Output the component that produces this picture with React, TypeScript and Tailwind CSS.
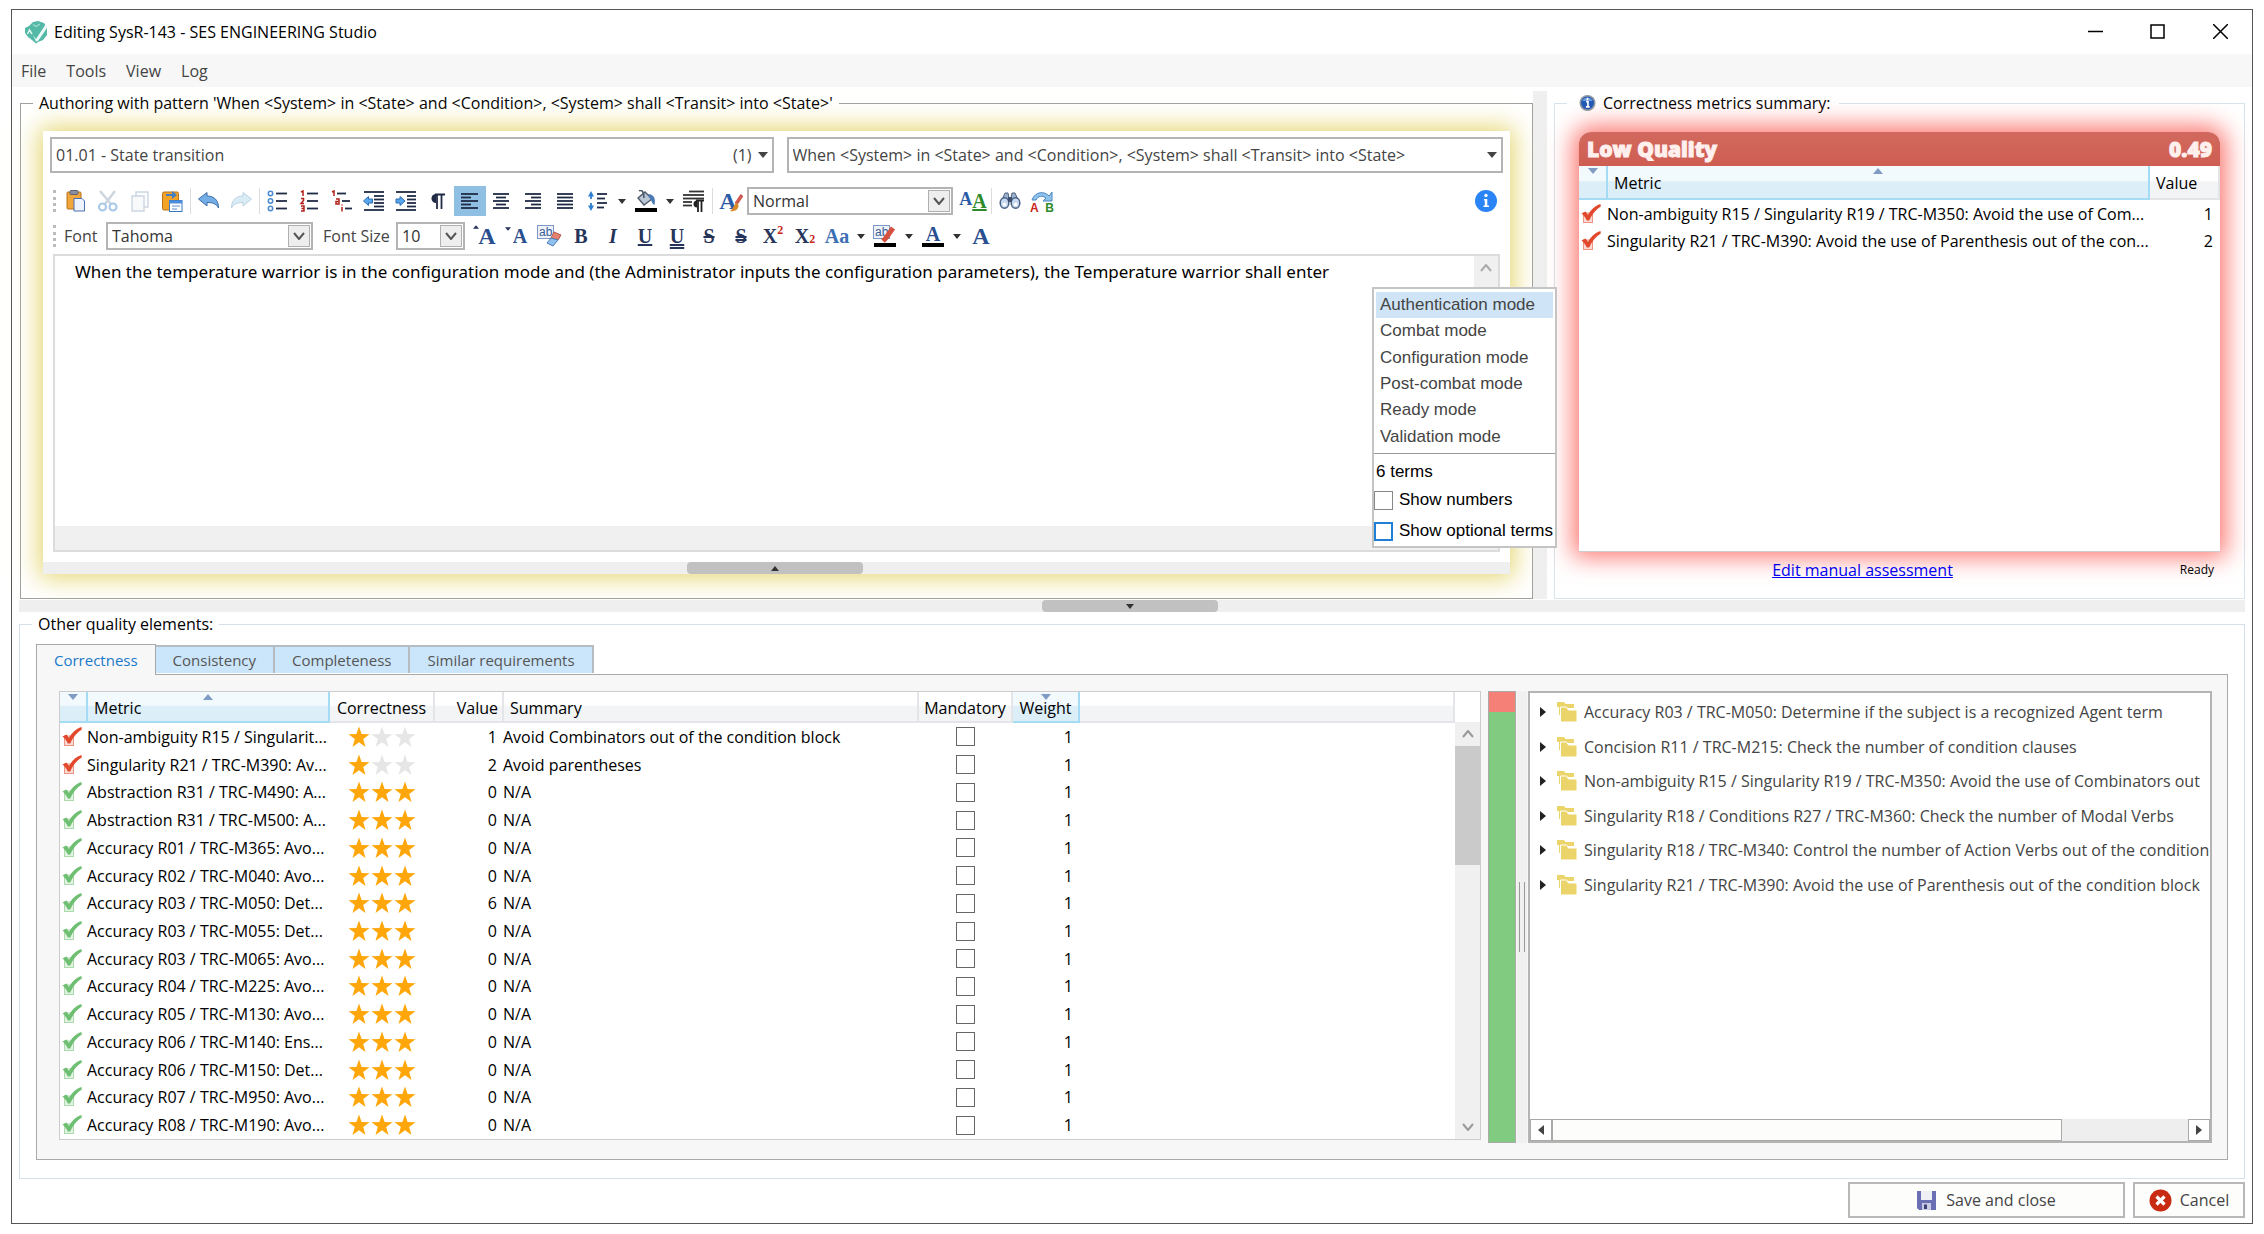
import { useState } from "react";
import type { ReactNode } from "react";
import clsx from "clsx";

const RED = "#e2492c";
const GREEN = "#6fbf73";

const terms = [
  "Authentication mode",
  "Combat mode",
  "Configuration mode",
  "Post-combat mode",
  "Ready mode",
  "Validation mode",
];

const summaryRows = [
  { name: "Non-ambiguity R15 / Singularity R19 / TRC-M350: Avoid the use of Com...", value: 1 },
  { name: "Singularity R21 / TRC-M390: Avoid the use of Parenthesis out of the con...", value: 2 },
];

const metrics = [
  { name: "Non-ambiguity R15 / Singularit...", stars: 1, value: 1, summary: "Avoid Combinators out of the condition block" },
  { name: "Singularity R21 / TRC-M390: Av...", stars: 1, value: 2, summary: "Avoid parentheses" },
  { name: "Abstraction R31 / TRC-M490: A...", stars: 3, value: 0, summary: "N/A" },
  { name: "Abstraction R31 / TRC-M500: A...", stars: 3, value: 0, summary: "N/A" },
  { name: "Accuracy R01 / TRC-M365: Avo...", stars: 3, value: 0, summary: "N/A" },
  { name: "Accuracy R02 / TRC-M040: Avo...", stars: 3, value: 0, summary: "N/A" },
  { name: "Accuracy R03 / TRC-M050: Det...", stars: 3, value: 6, summary: "N/A" },
  { name: "Accuracy R03 / TRC-M055: Det...", stars: 3, value: 0, summary: "N/A" },
  { name: "Accuracy R03 / TRC-M065: Avo...", stars: 3, value: 0, summary: "N/A" },
  { name: "Accuracy R04 / TRC-M225: Avo...", stars: 3, value: 0, summary: "N/A" },
  { name: "Accuracy R05 / TRC-M130: Avo...", stars: 3, value: 0, summary: "N/A" },
  { name: "Accuracy R06 / TRC-M140: Ens...", stars: 3, value: 0, summary: "N/A" },
  { name: "Accuracy R06 / TRC-M150: Det...", stars: 3, value: 0, summary: "N/A" },
  { name: "Accuracy R07 / TRC-M950: Avo...", stars: 3, value: 0, summary: "N/A" },
  { name: "Accuracy R08 / TRC-M190: Avo...", stars: 3, value: 0, summary: "N/A" },
];

const tree = [
  "Accuracy R03 / TRC-M050: Determine if the subject is a recognized Agent term",
  "Concision R11 / TRC-M215: Check the number of condition clauses",
  "Non-ambiguity R15 / Singularity R19 / TRC-M350: Avoid the use of Combinators out",
  "Singularity R18 / Conditions R27 / TRC-M360: Check the number of Modal Verbs",
  "Singularity R18 / TRC-M340: Control the number of Action Verbs out of the condition",
  "Singularity R21 / TRC-M390: Avoid the use of Parenthesis out of the condition block",
];

const tabs = ["Correctness", "Consistency", "Completeness", "Similar requirements"];

/* ---------- small drawings ---------- */

function Svg({ children, size = 22 }: { children: ReactNode; size?: number }) {
  return (
    <svg width={size} height={size} viewBox="0 0 22 22" fill="none" aria-hidden="true">
      {children}
    </svg>
  );
}

function Lines({ rows, color = "#1f2a44" }: { rows: number[][]; color?: string }) {
  return (
    <>
      {rows.map(([x1, x2, y]) => (
        <path key={`${x1}-${y}`} d={`M${x1} ${y}H${x2}`} stroke={color} strokeWidth="1.8" />
      ))}
    </>
  );
}

function Triangle({ dir, className = "fill-[#444]" }: { dir: "up" | "down" | "left" | "right"; className?: string }) {
  const d = {
    up: "M0 8 L5 2 L10 8Z",
    down: "M0 2 L10 2 L5 8Z",
    left: "M8 0 L2 5 L8 10Z",
    right: "M2 0 L8 5 L2 10Z",
  }[dir];
  return (
    <svg viewBox="0 0 10 10" className={clsx("size-[10px] shrink-0", className)} aria-hidden="true">
      <path d={d} />
    </svg>
  );
}

function Chevron({ up, className = "stroke-[#555]" }: { up?: boolean; className?: string }) {
  return (
    <svg width="12" height="8" viewBox="0 0 12 8" fill="none" strokeWidth="2" className={className} aria-hidden="true">
      <path d={up ? "M1 7 L6 1 L11 7" : "M1 1 L6 7 L11 1"} />
    </svg>
  );
}

function CheckMark({ color }: { color: string }) {
  return (
    <svg width="20" height="20" viewBox="0 0 20 20" fill="none" aria-hidden="true">
      <rect x="2.5" y="9" width="9" height="9.5" fill={color} fillOpacity="0.2" stroke={color} strokeOpacity="0.55" />
      <path d="M.5 9.500 L4.500 7.500 L7 11 C10 5.500 13.500 2 19.500 0 L19.800 2.500 C15 5.500 11 10 8.200 16.500 L5.800 16.500 C4.500 13.500 3 11.500 .5 9.500Z" fill={color} />
    </svg>
  );
}

function Stars({ count }: { count: number }) {
  return (
    <svg width="68" height="22" viewBox="0 0 68 22" role="img" aria-label={`${count} of 3`}>
      {[0, 1, 2].map((i) => (
        <path
          key={i}
          transform={`translate(${i * 23} 0)`}
          d="M11 .5 L13.6 8.1 L21.5 8.3 L15.2 13.1 L17.5 21 L11 16.3 L4.5 21 L6.8 13.1 L.5 8.3 L8.4 8.1Z"
          fill={i < count ? "#ffa60a" : "#e6e6e6"}
        />
      ))}
    </svg>
  );
}

function Folder() {
  return (
    <svg width="22" height="20" viewBox="0 0 22 20" fill="#ebd56a" className="shrink-0" aria-hidden="true">
      <path d="M1 0h7l1.500 2H18v4H5v7H3V5H1Z" />
      <path d="M4.500 5h6l2 3H21v12H4.500Z" stroke="#fff" strokeWidth="1" />
    </svg>
  );
}

function AppLogo() {
  return (
    <svg width="24" height="24" viewBox="0 0 24 24" fill="none" aria-hidden="true">
      <path d="M1 8 L5 6 L9 2 L14 1 L20 3 L23 8 L23 15 L19 20 L14 22 L12 23.500 L8 20 L4 17 L1 13Z" fill="#54b9a6" />
      <path d="M9 15 L12 19 L21.500 4.500 L23 8 L14 21 L12 21.500Z" fill="#eefaf7" />
      <path d="M3.500 14 L5.500 10 L8 14" stroke="#e2f6f2" strokeWidth="1.500" />
      <path d="M9 4.500 L12 6.500 L16 4" stroke="#a5dcd0" strokeWidth="1.200" />
    </svg>
  );
}

function InfoBadge() {
  return (
    <svg width="17" height="18" viewBox="0 0 18 18" aria-hidden="true">
      <circle cx="9" cy="9" r="8.500" fill="#8e98a6" />
      <circle cx="9" cy="9" r="6.800" fill="#1f59b5" />
      <path d="M3.500 7 A6 6 0 0 1 14.500 7Z" fill="#6fa0e0" />
      <path d="M9 3.500v2.200 M7.500 7.500H9.500V13 M7.300 13.200h4" stroke="#fff" strokeWidth="1.800" fill="none" />
    </svg>
  );
}

const icons = {
  paste: (
    <Svg>
      <rect x="2" y="2" width="14" height="17" rx="1" fill="#f0a63a" stroke="#b8731c" />
      <rect x="5" y="0.5" width="8" height="4" rx="1" fill="#8a8fa0" stroke="#5f6474" />
      <path d="M9 8.500h8l2.500 2.500v10H9Z" fill="#eef4ff" stroke="#4a6db0" />
    </Svg>
  ),
  cut: (
    <Svg>
      <path d="M3 1 L14 14 M18 1 L8 14" stroke="#ccd5de" strokeWidth="2.400" />
      <circle cx="5.500" cy="17" r="3.500" stroke="#a9c9e6" strokeWidth="2.200" />
      <circle cx="16" cy="17" r="3.500" stroke="#a9c9e6" strokeWidth="2.200" />
    </Svg>
  ),
  copy: (
    <Svg>
      <path d="M7 2h12v15H7Z" fill="#fbfcfd" stroke="#ccd6e2" strokeWidth="1.400" />
      <path d="M3 6h12v15H3Z" fill="#f7f9fb" stroke="#ccd6e2" strokeWidth="1.400" />
    </Svg>
  ),
  pasteSpecial: (
    <Svg>
      <rect x="1.500" y="2" width="16" height="18" rx="1.500" fill="#f3a326" stroke="#b8731c" />
      <path d="M5 4h6V1l5 4-5 4V6H5Z" fill="#3f7fc8" />
      <rect x="8.500" y="10.500" width="12.500" height="11" fill="#fff" stroke="#3b78c4" />
      <path d="M8.500 12h12.500" stroke="#4c8ddb" strokeWidth="3" />
      <path d="M11 16h8 M11 19h5" stroke="#5d8fcc" />
    </Svg>
  ),
  undo: (
    <Svg>
      <path d="M.5 9 L9 2.500 V6 C16 6 20.500 10 20.500 18 C18 13.500 14.500 12.500 9 12.500 V16Z" fill="#74aee6" stroke="#3d6ca8" />
    </Svg>
  ),
  redo: (
    <Svg>
      <path d="M21.500 9 L13 2.500 V6 C6 6 1.500 10 1.500 18 C4 13.500 7.500 12.500 13 12.500 V16Z" fill="#d9ebf5" stroke="#bcd3e3" />
    </Svg>
  ),
  bullets: (
    <Svg>
      {[3.5, 11, 18.5].map((y) => (
        <circle key={y} cx="3.500" cy={y} r="2.200" stroke="#4a8ad0" strokeWidth="1.500" />
      ))}
      <Lines rows={[[9, 20, 3.5], [9, 20, 11], [9, 20, 18.5]]} />
    </Svg>
  ),
  numbers: (
    <Svg>
      <path d="M2 2 L4 1V6 M2 8.500h2.500v2L2 13.500h3 M2 16h3v5H2 M2.500 18.500H5" stroke="#b4211a" strokeWidth="1.500" />
      <Lines rows={[[8, 19, 3.5], [8, 19, 11], [8, 19, 18.5]]} />
    </Svg>
  ),
  multilevel: (
    <Svg>
      <path d="M1 2 L3 1V6 M5 9h3v5H5v-2.500h3 M11 17v4.500 M11 14.500v1" stroke="#b4211a" strokeWidth="1.500" />
      <Lines rows={[[6, 15, 3.5], [11, 19, 11], [14, 21, 18.5]]} />
    </Svg>
  ),
  outdent: (
    <Svg>
      <Lines rows={[[1, 21, 2], [1, 21, 20], [11, 21, 6], [11, 21, 9.5], [11, 21, 13], [11, 21, 16.5]]} />
      <path d="M0.500 11 L5.500 6.500V9h4v4h-4v2.500Z" fill="#58a6ec" stroke="#2d6cb5" />
    </Svg>
  ),
  indent: (
    <Svg>
      <Lines rows={[[1, 21, 2], [1, 21, 20], [12, 21, 6], [12, 21, 9.5], [12, 21, 13], [12, 21, 16.5]]} />
      <path d="M10 11 L5 6.500V9H1v4h4v2.500Z" fill="#58a6ec" stroke="#2d6cb5" />
    </Svg>
  ),
  pilcrow: (
    <Svg>
      <path d="M9 4 A4.500 4.500 0 0 0 9 13Z" fill="#1f2a44" />
      <path d="M10 4v15 M14.500 4v15 M8 4.500h10" stroke="#1f2a44" strokeWidth="1.800" />
    </Svg>
  ),
  alignLeft: (
    <Svg>
      <Lines rows={[[2, 19, 4], [2, 12, 7.5], [2, 19, 11], [2, 12, 14.5], [2, 19, 18]]} />
    </Svg>
  ),
  alignCenter: (
    <Svg>
      <Lines rows={[[2, 18, 4], [5, 15, 7.5], [2, 18, 11], [5, 15, 14.5], [2, 18, 18]]} />
    </Svg>
  ),
  alignRight: (
    <Svg>
      <Lines rows={[[2, 18, 4], [8, 18, 7.5], [2, 18, 11], [8, 18, 14.5], [2, 18, 18]]} />
    </Svg>
  ),
  justify: (
    <Svg>
      <Lines rows={[[2, 18, 4], [2, 18, 7.5], [2, 18, 11], [2, 18, 14.5], [2, 18, 18]]} />
    </Svg>
  ),
  lineSpacing: (
    <Svg>
      <path d="M1 6.500 L4 1 L7 6.500Z M1 15.500 L4 21 L7 15.500Z" fill="#2f7fd3" />
      <path d="M4 6v3 M4 13v3" stroke="#2f7fd3" strokeWidth="1.800" />
      <Lines rows={[[10, 20, 4], [10, 18, 8.5], [10, 20, 13], [10, 17, 17.5]]} />
    </Svg>
  ),
  fill: (
    <Svg>
      <path d="M3 8 L10 2 L17 9 L9 15Z" fill="#b9c6d6" stroke="#4b5666" strokeWidth="1.300" />
      <path d="M4 1 C7 -1 9 2 9 8" stroke="#4b5666" strokeWidth="1.500" />
      <path d="M13 4 C19 4 21 9 19.500 15 C16 13 17 10 14.500 8Z" fill="#4a7ab5" />
      <path d="M0 20h22" stroke="#000" strokeWidth="4" />
    </Svg>
  ),
  paragraph: (
    <Svg>
      <Lines color="#333" rows={[[6, 21, 1.5], [0, 21, 5], [0, 21, 8.5], [0, 9, 12], [0, 9, 15.5]]} />
      <path d="M14 10.500 A3.500 3.500 0 0 0 14 17.500Z" fill="#222" />
      <path d="M15 10v12 M18.500 10v12 M13 10.500h8" stroke="#222" strokeWidth="1.800" />
    </Svg>
  ),
  binoculars: (
    <Svg>
      <path d="M6 3h3l1.500 8H2.500Z M13 3h3l3.500 8h-8Z" fill="#9fb2cc" stroke="#4a6285" />
      <ellipse cx="5.500" cy="13" rx="4.300" ry="5.300" fill="#c9daf0" stroke="#4a6285" strokeWidth="1.500" />
      <ellipse cx="16.500" cy="13" rx="4.300" ry="5.300" fill="#c9daf0" stroke="#4a6285" strokeWidth="1.500" />
      <circle cx="5.500" cy="14.500" r="1.800" fill="#fff" />
      <circle cx="16.500" cy="14.500" r="1.800" fill="#fff" />
      <path d="M9 7h4v5H9Z" fill="#3c4f70" />
    </Svg>
  ),
};

function AbBox() {
  return (
    <span className="absolute top-1 left-1 border border-[#7d98c6] bg-[#eef3fb] px-px font-['Liberation_Sans'] text-xs leading-3 font-normal text-[#3b5c95]">
      ab
    </span>
  );
}

/* ---------- form controls ---------- */

function ToolButton({ label, active, children }: { label: string; active?: boolean; children: ReactNode }) {
  return (
    <button
      type="button"
      title={label}
      aria-label={label}
      className={clsx(
        "relative flex h-[30px] w-8 shrink-0 items-center justify-center font-['Liberation_Serif'] text-xl font-bold text-[#26345a]",
        active && "bg-[#8fbfe3]"
      )}
    >
      {children}
    </button>
  );
}

function Caret({ label }: { label: string }) {
  return (
    <button type="button" aria-label={label} className="flex h-[30px] w-4 shrink-0 items-center justify-center">
      <svg width="8" height="5" viewBox="0 0 8 5" fill="#333" aria-hidden="true">
        <path d="M0 0h8L4 5Z" />
      </svg>
    </button>
  );
}

function Separator() {
  return <span className="mx-0.5 h-[26px] w-px shrink-0 bg-[#dcdcdc]" />;
}

function Grip() {
  return <span className="mr-1 ml-[3px] h-[22px] w-0 shrink-0 border-l-3 border-dotted border-[#bbb]" />;
}

function ToolSelect({ id, label, value, className }: { id: string; label: string; value: string; className: string }) {
  return (
    <div className={clsx("relative h-7 shrink-0", className)}>
      <select
        id={id}
        aria-label={label}
        className="size-full appearance-none border-2 border-[#b4b4b4] bg-white pl-1 text-base leading-6 text-[#333]"
      >
        <option>{value}</option>
      </select>
      <span className="pointer-events-none absolute top-[3px] right-[3px] bottom-[3px] flex w-[22px] items-center justify-center border border-[#b0b0b0] bg-[#eee]">
        <Chevron />
      </span>
    </div>
  );
}

function PatternSelect({ label, value, count }: { label: string; value: string; count?: string }) {
  return (
    <div className="relative h-9">
      <select
        aria-label={label}
        className="size-full appearance-none border-2 border-[#b4b4b4] bg-white pl-1 text-base text-[#444]"
      >
        <option>{value}</option>
      </select>
      <span className="pointer-events-none absolute inset-y-0 right-1.5 flex items-center gap-1.5 text-base text-[#444]">
        {count}
        <Triangle dir="down" />
      </span>
    </div>
  );
}

function Handle({ dir }: { dir: "up" | "down" }) {
  return (
    <button
      type="button"
      aria-label={dir === "up" ? "Collapse" : "Expand"}
      className="flex h-full w-44 items-center justify-center rounded bg-[#c1c1c1]"
    >
      <svg width="8" height="5" viewBox="0 0 8 5" fill="#333" aria-hidden="true">
        <path d={dir === "up" ? "M0 5h8L4 0Z" : "M0 0h8L4 5Z"} />
      </svg>
    </button>
  );
}

function SortHeader({ children, dir, className }: { children?: ReactNode; dir: "up" | "down"; className?: string }) {
  return (
    <th
      className={clsx(
        "relative border-r-2 border-b-2 border-[#a5dcf5] bg-linear-to-b from-[#f3fafd] from-45% to-[#dceef7] to-50% pt-0.5 font-normal",
        className
      )}
    >
      <Triangle dir={dir} className="absolute top-0 left-1/2 -translate-x-1/2 fill-[#7f9bc4]" />
      {children}
    </th>
  );
}

const plainHeader =
  "border-r-2 border-b-2 border-[#e3e5e8] bg-linear-to-b from-white from-45% to-[#f2f4f6] to-50% pt-0.5 font-normal";

/* ---------- panels ---------- */

function TermsPopup() {
  const [selected, setSelected] = useState(0);
  return (
    <div className="absolute top-[31px] -right-[59px] z-10 w-[185px] border-2 border-[#c4c4c4] bg-white font-['Liberation_Sans'] text-[17px] whitespace-nowrap text-black">
      <ul className="grid h-[165px] auto-rows-fr border-b border-[#999] px-0.5 pt-[3px] pb-[3px]">
        {terms.map((term, i) => (
          <li key={term}>
            <button
              type="button"
              onClick={() => setSelected(i)}
              className={clsx("block h-full w-full pl-1 text-left text-[#444]", i === selected && "bg-[#cfe4f6]")}
            >
              {term}
            </button>
          </li>
        ))}
      </ul>
      <p className="pt-1.5 pl-0.5 leading-6">6 terms</p>
      <label className="flex h-8 items-center gap-1.5">
        <input type="checkbox" className="size-[19px] shrink-0 appearance-none border border-[#888] bg-white" />
        Show numbers
      </label>
      <label className="flex h-[30px] items-center gap-1.5">
        <input type="checkbox" className="size-[19px] shrink-0 appearance-none border-2 border-[#1f7fd6] bg-white" />
        Show optional terms
      </label>
    </div>
  );
}

function FormatToolbar() {
  return (
    <div className="text-base text-[#444]">
      <div className="flex h-[34px] items-center">
        <Grip />
        <ToolButton label="Paste">{icons.paste}</ToolButton>
        <ToolButton label="Cut">{icons.cut}</ToolButton>
        <ToolButton label="Copy">{icons.copy}</ToolButton>
        <ToolButton label="Paste special">{icons.pasteSpecial}</ToolButton>
        <Separator />
        <ToolButton label="Undo">{icons.undo}</ToolButton>
        <ToolButton label="Redo">{icons.redo}</ToolButton>
        <Separator />
        <ToolButton label="Bullets">{icons.bullets}</ToolButton>
        <ToolButton label="Numbering">{icons.numbers}</ToolButton>
        <ToolButton label="Multilevel list">{icons.multilevel}</ToolButton>
        <ToolButton label="Decrease indent">{icons.outdent}</ToolButton>
        <ToolButton label="Increase indent">{icons.indent}</ToolButton>
        <ToolButton label="Show marks">{icons.pilcrow}</ToolButton>
        <ToolButton label="Align left" active>{icons.alignLeft}</ToolButton>
        <ToolButton label="Center">{icons.alignCenter}</ToolButton>
        <ToolButton label="Align right">{icons.alignRight}</ToolButton>
        <ToolButton label="Justify">{icons.justify}</ToolButton>
        <ToolButton label="Line spacing">{icons.lineSpacing}</ToolButton>
        <Caret label="Line spacing options" />
        <ToolButton label="Shading">{icons.fill}</ToolButton>
        <Caret label="Shading options" />
        <ToolButton label="Paragraph">{icons.paragraph}</ToolButton>
        <Separator />
        <ToolButton label="Style">
          <span className="pr-1.5 text-2xl text-[#2a5ca8]">A</span>
          <svg width="14" height="18" viewBox="0 0 14 18" className="absolute right-1 bottom-1" aria-hidden="true">
            <path d="M13 1 L7 10" stroke="#cf5b52" strokeWidth="3.500" />
            <path d="M8 9 C4 10 5 15 1 17 C6 18 10 15 9.500 11Z" fill="#d98b2b" />
          </svg>
        </ToolButton>
        <ToolSelect id="style" label="Paragraph style" value="Normal" className="w-[206px]" />
        <span className="w-1" />
        <ToolButton label="Font styles">
          <span className="pb-1 text-lg leading-5 text-[#2a5ca8]">A</span>
          <span className="text-xl text-[#2f8a2c] underline">A</span>
        </ToolButton>
        <Separator />
        <ToolButton label="Find">{icons.binoculars}</ToolButton>
        <ToolButton label="Replace">
          <svg width="24" height="12" viewBox="0 0 24 12" className="absolute top-1" fill="none" aria-hidden="true">
            <path d="M2 10 C5 1 15 1 19 6 L22 2 V11 H13 L16 8 C12 5 8 6 6 10Z" fill="#8fc3ec" stroke="#4b86c0" />
          </svg>
          <span className="flex w-6 justify-between self-end font-['Liberation_Sans'] text-xs">
            <span className="text-[#c8281c]">A</span>
            <span className="text-[#2f8a2c]">B</span>
          </span>
        </ToolButton>
        <button type="button" aria-label="Information" className="mr-1.5 ml-auto">
          <svg width="22" height="22" viewBox="0 0 22 22" aria-hidden="true">
            <circle cx="11" cy="11" r="11" fill="#2b84f5" />
            <circle cx="11" cy="5.500" r="1.700" fill="#fff" />
            <path d="M9 9h3.300v6.500H14V17H8.500v-1.500h1.300V10.500H9Z" fill="#fff" />
          </svg>
        </button>
      </div>
      <div className="flex h-9 items-center">
        <Grip />
        <label htmlFor="font" className="w-[46px] pl-1">Font</label>
        <ToolSelect id="font" label="Font" value="Tahoma" className="w-[207px]" />
        <label htmlFor="font-size" className="w-[83px] pl-2.5 whitespace-nowrap">Font Size</label>
        <ToolSelect id="font-size" label="Font size" value="10" className="w-[69px]" />
        <span className="w-1" />
        <ToolButton label="Grow font">
          <Triangle dir="up" className="absolute top-0.5 left-1 h-2 w-1.5 fill-[#26345a]" />
          <span className="pl-1 text-2xl text-[#2a4f8f]">A</span>
        </ToolButton>
        <ToolButton label="Shrink font">
          <Triangle dir="down" className="absolute top-1 left-1 h-2 w-1.5 fill-[#26345a]" />
          <span className="pl-1.5 text-[#2a4f8f]">A</span>
        </ToolButton>
        <ToolButton label="Clear formatting">
          <AbBox />
          <svg width="18" height="16" viewBox="0 0 18 16" className="absolute right-0.5 bottom-1" aria-hidden="true">
            <path d="M9 1 L16 4 L13 9 L6 7Z" fill="#e5826f" stroke="#b35a49" />
            <path d="M6 7 L13 9 L8 15 L2 12Z" fill="#8ec1ee" stroke="#4b7db8" />
          </svg>
        </ToolButton>
        <ToolButton label="Bold">B</ToolButton>
        <ToolButton label="Italic"><span className="italic">I</span></ToolButton>
        <ToolButton label="Underline"><span className="underline">U</span></ToolButton>
        <ToolButton label="Double underline"><span className="underline decoration-double">U</span></ToolButton>
        <ToolButton label="Strikethrough"><span className="line-through">S</span></ToolButton>
        <ToolButton label="Double strikethrough"><span className="line-through decoration-double">S</span></ToolButton>
        <ToolButton label="Superscript">X<sup className="text-xs text-[#c8281c]">2</sup></ToolButton>
        <ToolButton label="Subscript">X<sub className="text-xs text-[#c8281c]">2</sub></ToolButton>
        <ToolButton label="Change case"><span className="text-[#3c6fb4]">Aa</span></ToolButton>
        <Caret label="Case options" />
        <ToolButton label="Highlight">
          <AbBox />
          <svg width="22" height="22" viewBox="0 0 22 22" className="absolute bottom-1" aria-hidden="true">
            <path d="M19 3 L12 13 L9 16" stroke="#d6503f" strokeWidth="5" />
            <path d="M0 20h22" stroke="#000" strokeWidth="4" />
          </svg>
        </ToolButton>
        <Caret label="Highlight options" />
        <ToolButton label="Font color">
          <span className="pb-1 text-[#2a4f8f]">A</span>
          <span className="absolute inset-x-[5px] bottom-1 h-1 bg-black" />
        </ToolButton>
        <Caret label="Font color options" />
        <ToolButton label="Font dialog"><span className="text-2xl text-[#2a4f8f]">A</span></ToolButton>
      </div>
    </div>
  );
}

function AuthoringPanel() {
  return (
    <fieldset className="ml-px flex min-w-0 flex-col border border-[#a0a0a0] bg-white">
      <legend className="ml-3 h-6 px-1.5 leading-6">
        Authoring with pattern 'When &lt;System&gt; in &lt;State&gt; and &lt;Condition&gt;, &lt;System&gt; shall &lt;Transit&gt; into &lt;State&gt;'
      </legend>
      <div className="mx-[22px] mt-4 mb-6 flex flex-1 flex-col bg-white shadow-[0_0_24px_4px_#e6d671]">
        <div className="flex flex-1 flex-col px-[7px] pt-1.5">
          <div className="grid grid-cols-[723fr_716fr] gap-[13px] pb-[11px]">
            <PatternSelect label="Pattern group" value="01.01 - State transition" count="(1)" />
            <PatternSelect
              label="Pattern"
              value="When <System> in <State> and <Condition>, <System> shall <Transit> into <State>"
            />
          </div>
          <FormatToolbar />
          <div className="relative mx-[3px] mb-2.5 flex flex-1 flex-col border-2 border-[#dcdcdc]">
            <div className="flex flex-1">
              <textarea
                aria-label="Requirement text"
                spellCheck={false}
                className="flex-1 resize-none overflow-hidden pt-1 pl-5 font-['Noto_Sans'] text-[17px] leading-6 text-black outline-none"
                defaultValue="When the temperature warrior is in the configuration mode and (the Administrator inputs the configuration parameters), the Temperature warrior shall enter"
              />
              <div className="flex w-6 justify-center bg-[#f0f0f0] pt-2">
                <Chevron up className="stroke-[#aaa]" />
              </div>
            </div>
            <div className="h-6 bg-[#f0f0f0]" />
            <TermsPopup />
          </div>
        </div>
        <div className="flex h-3 justify-center bg-[#efefef] pr-1">
          <Handle dir="up" />
        </div>
      </div>
    </fieldset>
  );
}

function SummaryPanel() {
  return (
    <fieldset className="ml-[7px] flex min-w-0 flex-col border border-[#d8e4ec]">
      <legend className="ml-3 flex h-6 items-center gap-[7px] pr-2 pl-3">
        <InfoBadge />
        Correctness metrics summary:
      </legend>
      <div className="mx-6 mt-[17px] flex flex-1 flex-col rounded-t-xl bg-white shadow-[0_0_24px_6px_#fb7670]">
        <div className="flex h-[34px] items-center justify-between rounded-t-xl bg-linear-to-b from-[#d2695e] to-[#cf5d52] px-2 text-[21px] font-extrabold text-[#fff0ee] [-webkit-text-stroke:1px_#fff0ee]">
          <span>Low Quality</span>
          <span>0.49</span>
        </div>
        <table className="w-full table-fixed text-left whitespace-nowrap">
          <colgroup>
            <col className="w-7" />
            <col />
            <col className="w-[70px]" />
          </colgroup>
          <thead>
            <tr className="h-[33px]">
              <SortHeader dir="down" />
              <SortHeader dir="up" className="pl-1.5">Metric</SortHeader>
              <th className={clsx(plainHeader, "pl-1.5")}>Value</th>
            </tr>
          </thead>
          <tbody>
            {summaryRows.map((row) => (
              <tr key={row.name} className="h-7">
                <td className="pl-0.5"><CheckMark color={RED} /></td>
                <td>{row.name}</td>
                <td className="pr-1.5 text-right">{row.value}</td>
              </tr>
            ))}
          </tbody>
        </table>
      </div>
      <div className="mx-6 flex h-[47px] items-start border-t border-[#ccc] pt-1.5">
        <span className="flex-1" />
        <a href="#assessment" className="text-[#0000ee] underline">Edit manual assessment</a>
        <span className="w-[68px]" />
        <span className="flex-1 pr-1.5 text-right text-xs leading-6">Ready</span>
      </div>
    </fieldset>
  );
}

function MetricsTable() {
  return (
    <div className="mb-[3px] flex min-w-0 border border-[#ccc] bg-white">
      <table className="h-full min-w-0 flex-1 table-fixed text-left whitespace-nowrap">
        <colgroup>
          <col className="w-[27px]" />
          <col className="w-[242px]" />
          <col className="w-[105px]" />
          <col className="w-[69px]" />
          <col className="w-[415px]" />
          <col className="w-[94px]" />
          <col className="w-[67px]" />
          <col />
        </colgroup>
        <thead>
          <tr className="h-[30px]">
            <SortHeader dir="down" />
            <SortHeader dir="up" className="pl-1.5">Metric</SortHeader>
            <th className={clsx(plainHeader, "text-center")}>Correctness</th>
            <th className={clsx(plainHeader, "pr-1 text-right")}>Value</th>
            <th className={clsx(plainHeader, "pl-1.5")}>Summary</th>
            <th className={clsx(plainHeader, "text-center")}>Mandatory</th>
            <SortHeader dir="down" className="text-center">Weight</SortHeader>
            <th className={plainHeader} />
          </tr>
        </thead>
        <tbody>
          {metrics.map((m) => (
            <tr key={m.name}>
              <td className="pl-0.5"><CheckMark color={m.stars < 3 ? RED : GREEN} /></td>
              <td>{m.name}</td>
              <td><span className="flex justify-center"><Stars count={m.stars} /></span></td>
              <td className="pr-1.5 text-right">{m.value}</td>
              <td>{m.summary}</td>
              <td>
                <input
                  type="checkbox"
                  aria-label={`${m.name} mandatory`}
                  className="mx-auto block size-[19px] appearance-none border border-[#666] bg-white"
                />
              </td>
              <td className="pr-1.5 text-right">1</td>
              <td />
            </tr>
          ))}
        </tbody>
      </table>
      <div className="flex w-[25px] flex-col items-center pt-[30px]">
        <div className="flex h-6 w-full items-center justify-center bg-[#f0f0f0]">
          <Chevron up className="stroke-[#999]" />
        </div>
        <div className="h-[119px] w-full bg-[#cacaca]" />
        <div className="flex w-full flex-1 items-end justify-center bg-[#f0f0f0] pb-2">
          <Chevron className="stroke-[#999]" />
        </div>
      </div>
    </div>
  );
}

function MetricsTree() {
  return (
    <div className="ml-px flex min-w-0 flex-col overflow-hidden border-2 border-[#b4b4b4] bg-white text-[#444]">
      <ul className="grid h-[209px] auto-rows-fr pt-0.5 whitespace-nowrap">
        {tree.map((item) => (
          <li key={item} className="flex items-center pl-2">
            <button type="button" aria-label="Expand" className="w-[18px] shrink-0">
              <Triangle dir="right" className="fill-[#222]" />
            </button>
            <Folder />
            <span className="pl-1.5">{item}</span>
          </li>
        ))}
      </ul>
      <div className="mt-auto flex h-[22px] bg-[#eee]">
        <button type="button" aria-label="Scroll left" className="flex w-[22px] items-center justify-center border border-[#aaa] bg-white">
          <Triangle dir="left" />
        </button>
        <div className="w-3/4 border border-[#aaa] bg-[#fdfdfc]" />
        <button type="button" aria-label="Scroll right" className="ml-auto flex w-[22px] items-center justify-center border border-[#aaa] bg-white">
          <Triangle dir="right" />
        </button>
      </div>
    </div>
  );
}

function QualityElements() {
  const [tab, setTab] = useState(tabs[0]);
  return (
    <fieldset className="flex min-h-0 min-w-0 flex-1 flex-col border border-[#d5e0ea] px-4 pb-[18px]">
      <legend className="-ml-1 h-6 px-1.5 leading-6">Other quality elements:</legend>
      <div role="tablist" className="relative -mb-px flex items-end pt-2 text-[15px]">
        {tabs.map((name) => (
          <button
            key={name}
            type="button"
            role="tab"
            aria-selected={name === tab}
            onClick={() => setTab(name)}
            className={clsx(
              "px-[17px]",
              name === tab
                ? "h-[31px] border border-b-0 border-[#a9a9a9] bg-[#f7f7f7] text-[#1979ca]"
                : "mb-0.5 h-7 border-t-2 border-r-2 border-[#b5bcc2] bg-[#cbe6fa] text-[#555]"
            )}
          >
            {name}
          </button>
        ))}
      </div>
      <div className="grid min-h-0 flex-1 grid-cols-[1422fr_35px_11px_685fr] border border-[#a9a9a9] bg-[#f7f7f7] py-4 pr-[15px] pl-[22px]">
        <MetricsTable />
        <div className="ml-[7px] flex flex-col border border-[#aaa] bg-[#80cb80]">
          <div className="h-5 bg-[#f58078]" />
        </div>
        <div className="ml-px flex items-center bg-[#f0f0f0] pl-0.5">
          <span className="h-[70px] w-1.5 border-x border-[#999]" />
        </div>
        <MetricsTree />
      </div>
    </fieldset>
  );
}

export default function App() {
  return (
    <div className="h-screen bg-white px-[11px] pt-[9px] pb-2.5 font-['Open_Sans',sans-serif] text-base leading-6 text-black">
      <div className="flex h-full flex-col border border-[#555] bg-white">
        <header className="flex h-11 shrink-0 items-center pb-px pl-3">
          <AppLogo />
          <h1 className="flex-1 pl-1.5">Editing SysR-143 - SES ENGINEERING Studio</h1>
          <button type="button" aria-label="Minimize" className="flex h-full w-[62px] items-center justify-center">
            <svg width="15" height="15" viewBox="0 0 15 15" stroke="#000" strokeWidth="1.500"><path d="M0 7.500h15" /></svg>
          </button>
          <button type="button" aria-label="Maximize" className="flex h-full w-[62px] items-center justify-center">
            <svg width="15" height="15" viewBox="0 0 15 15" stroke="#000" strokeWidth="1.500" fill="none"><path d="M1 1h13v13H1Z" /></svg>
          </button>
          <button type="button" aria-label="Close" className="flex h-full w-16 items-center justify-center">
            <svg width="15" height="15" viewBox="0 0 15 15" stroke="#000" strokeWidth="1.500"><path d="M0 0 L15 15 M15 0 L0 15" /></svg>
          </button>
        </header>
        <nav className="flex h-[33px] shrink-0 items-center gap-5 bg-[#f7f7f7] pl-[9px] text-[#444]">
          <button type="button">File</button>
          <button type="button">Tools</button>
          <button type="button">View</button>
          <button type="button">Log</button>
        </nav>
        <main className="flex min-h-0 flex-1 flex-col px-[7px] pt-1">
          <div className="grid h-[508px] shrink-0 grid-cols-[1514fr_14px_698fr]">
            <AuthoringPanel />
            <div className="bg-[#efefef]" />
            <SummaryPanel />
          </div>
          <div className="mt-px flex h-3 shrink-0 justify-center bg-[#efefef] pr-1">
            <Handle dir="down" />
          </div>
          <QualityElements />
          <footer className="flex h-11 shrink-0 items-start justify-end gap-2 pt-[3px] text-[#444]">
            <button type="button" className="flex h-9 w-[277px] items-center justify-center gap-2.5 border-2 border-[#b8b8b8] bg-[#fdfdfc]">
              <svg width="19" height="19" viewBox="0 0 19 19" aria-hidden="true">
                <path d="M0 0h19v19H2L0 17Z" fill="#6a6fb4" />
                <path d="M4 0h11v9H4Z" fill="#eef0f6" />
                <path d="M5 12h9v7H5Z" fill="#c9cbe2" />
                <path d="M7 13.500h3V18H7Z" fill="#3a3f78" />
              </svg>
              Save and close
            </button>
            <button type="button" className="flex h-9 w-28 items-center justify-center gap-2 border-2 border-[#b8b8b8] bg-[#fdfdfc]">
              <svg width="23" height="23" viewBox="0 0 23 23" aria-hidden="true">
                <circle cx="11.500" cy="11.500" r="11" fill="#c92a12" />
                <path d="M7.500 7.500 L15.500 15.500 M15.500 7.500 L7.500 15.500" stroke="#fff" strokeWidth="3.200" />
              </svg>
              Cancel
            </button>
          </footer>
        </main>
      </div>
    </div>
  );
}
